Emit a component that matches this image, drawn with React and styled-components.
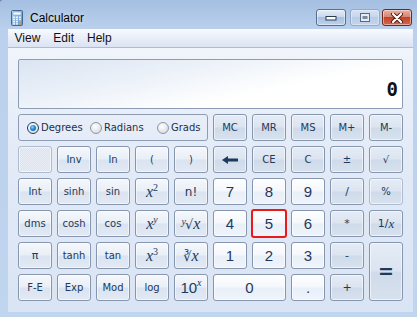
import React from 'react'
import styled, { createGlobalStyle, css } from 'styled-components'

const GlobalStyle = createGlobalStyle`
  html, body { margin: 0; padding: 0; }
  body { width: 417px; height: 317px; overflow: hidden; background: #6f7d90; }
  * { box-sizing: border-box; }
`

const Window = styled.div`
  width: 417px;
  height: 317px;
  display: flex;
  flex-direction: column;
  border-top-left-radius: 3px;
  background: linear-gradient(to bottom, #a4bfe1 0px, #bad0ec 29px, #c0d5ee 100%);
  font-family: "Liberation Sans", Arial, sans-serif;
`

const TitleBar = styled.div`
  height: 29px;
  flex: none;
  display: flex;
  align-items: center;
  padding: 6px 5px 0 11px;
`

const Title = styled.span`
  margin-left: 7px;
  font-size: 12px;
  color: #000;
  text-shadow: 0 0 6px rgba(255, 255, 255, 0.8);
`

const Caption = styled.div`
  margin-left: auto;
  display: flex;
  align-items: center;
`

const capKinds = {
  min: css`
    border-color: #566e8f;
    background: linear-gradient(to bottom, #e4edf8 0%, #c9d9ee 45%, #a8c0e0 50%, #bdd2ec 100%);
  `,
  max: css`
    margin: 0 2px 0 4px;
    border-color: #8ea4c2;
    background: linear-gradient(to bottom, #dce7f5 0%, #cbdaee 45%, #b9cde8 50%, #c6d8ee 100%);
    opacity: 0.85;
  `,
  close: css`
    border-color: #6c2a1f;
    background: linear-gradient(to bottom, #eab0a2 0%, #d98571 45%, #c2432a 50%, #d3684d 100%);
  `,
}

const CapButton = styled.div`
  width: 30px;
  height: 17px;
  border: 1px solid;
  border-radius: 3px;
  display: flex;
  align-items: center;
  justify-content: center;
  box-shadow: inset 0 0 0 1px rgba(255, 255, 255, 0.45);
  ${p => capKinds[p.$kind]}
`

const Client = styled.div`
  flex: 1;
  margin: 0 4px 5px 8px;
  display: flex;
  flex-direction: column;
`

const MenuBar = styled.div`
  height: 19px;
  flex: none;
  display: flex;
  align-items: center;
  background: linear-gradient(to bottom, #f8fafd 0%, #e9eef8 50%, #dbe3f2 100%);
  border-bottom: 1px solid #b3bccb;
`

const MenuItem = styled.span`
  padding: 0 6.5px;
  font-size: 12px;
  color: #111;
`

const Body = styled.div`
  flex: 1;
  padding: 11px 10px;
  background: linear-gradient(to bottom, #f0f4fb 0%, #e3ebf7 40%, #d9e4f4 100%);
`

const Display = styled.div`
  height: 50px;
  margin-bottom: 5px;
  border: 1px solid #8c9db5;
  border-radius: 2px;
  display: flex;
  align-items: flex-end;
  justify-content: flex-end;
  padding: 0 4px 9px 0;
  background: linear-gradient(168deg, #dae4f2 0%, #edf2f9 35%, #ffffff 65%);
  font-family: "DejaVu Sans Mono", "Liberation Mono", monospace;
  font-weight: bold;
  font-size: 19px;
  line-height: 1;
  color: #111;
`

const Pad = styled.div`
  display: grid;
  grid-template-columns: repeat(10, 34px);
  grid-auto-rows: 27px;
  gap: 5px;
`

const RadioGroup = styled.div`
  grid-column: span 5;
  border: 1px solid #8c9db5;
  border-radius: 3px;
  display: flex;
  align-items: center;
  padding-left: 8px;
`

const RadioItem = styled.label`
  display: flex;
  align-items: center;
  width: ${p => (p.$w ? `${p.$w}px` : 'auto')};
  font-family: "DejaVu Sans", Verdana, sans-serif;
  font-size: 10px;
  color: #1e2f48;
`

const RadioDot = styled.span`
  position: relative;
  width: 12px;
  height: 12px;
  margin-right: 2px;
  border-radius: 50%;
  border: 1px solid ${p => (p.$on ? '#2a3d55' : '#8f98a4')};
  background: radial-gradient(circle at 40% 35%, #ffffff 0%, #e9ecef 45%, #c9ced5 100%);
  ${p =>
    p.$on &&
    css`
      &::after {
        content: '';
        position: absolute;
        left: 2px;
        top: 2px;
        width: 6px;
        height: 6px;
        border-radius: 50%;
        background: radial-gradient(circle at 40% 35%, #8fd6ff 0%, #2a8fe0 40%, #0b4c94 100%);
      }
    `}
`

const keyVariants = {
  num: css`
    background: linear-gradient(to bottom, #fdfeff 0%, #f4f7fc 48%, #e9eff8 52%, #f0f4fb 100%);
  `,
  fn: css`
    background: linear-gradient(to bottom, #f5f8fc 0%, #e9eff7 48%, #dae3f0 52%, #e2e9f4 100%);
  `,
  op: css`
    background: linear-gradient(to bottom, #e5ecf6 0%, #dbe4f0 48%, #cfdaea 52%, #d8e2ee 100%);
  `,
  blank: css`
    background: repeating-conic-gradient(#dbe3ef 0 25%, #e9eef6 0 50%) 0 0 / 2px 2px;
  `,
}

const Key = styled.button`
  padding: 0;
  border: 1px solid ${p => (p.$off ? '#aebcd0' : '#8596ae')};
  border-radius: 3px;
  display: flex;
  align-items: center;
  justify-content: center;
  font-family: "DejaVu Sans", Verdana, sans-serif;
  font-size: ${p => p.$size || 10}px;
  line-height: 1;
  color: #1e395b;
  box-shadow: inset 0 0 0 1px rgba(255, 255, 255, 0.55);
  ${p => keyVariants[p.$v || 'fn']}
  ${p => p.$cols && css`grid-column: span ${p.$cols};`}
  ${p => p.$rows && css`grid-row: span ${p.$rows};`}
  ${p =>
    p.$hl &&
    css`
      border: 2px solid #ea1a1a;
      margin: -1px;
      box-shadow: none;
    `}
`

const Digit = styled.span`
  font-family: "Liberation Sans", Arial, sans-serif;
  font-size: 15px;
  color: #1e395b;
`

const Equals = styled.span`
  font-family: "DejaVu Sans", Verdana, sans-serif;
  font-weight: bold;
  font-size: 19px;
  color: #1e395b;
`

const MathX = styled.span`
  font-family: "Liberation Serif", "Times New Roman", serif;
  font-style: italic;
  font-size: ${p => p.$size || 16}px;
  color: #1e395b;
`

const Sup = styled.span`
  display: inline-block;
  position: relative;
  top: ${p => p.$top ?? -6}px;
  margin-right: ${p => p.$mr || 0}px;
  font-family: "Liberation Serif", "Times New Roman", serif;
  font-style: ${p => (p.$italic ? 'italic' : 'normal')};
  font-size: 10px;
`

const Radical = styled.span`
  font-family: "DejaVu Sans", sans-serif;
  font-style: normal;
  font-size: 13px;
`

const AppIcon = () => (
  <svg width="12" height="16" viewBox="0 0 12 16">
    <defs>
      <linearGradient id="ic" x1="0" y1="0" x2="1" y2="1">
        <stop offset="0" stopColor="#bcd8f4" />
        <stop offset="1" stopColor="#5d8fc6" />
      </linearGradient>
    </defs>
    <rect x="0.5" y="0.5" width="11" height="15" rx="1" fill="url(#ic)" stroke="#3f6898" />
    <rect x="2" y="2" width="8" height="3" fill="#f4fbff" stroke="#7ea2c8" strokeWidth="0.6" />
    {[0, 1, 2, 3].map(r =>
      [0, 1, 2].map(c => (
        <rect
          key={`${r}-${c}`}
          x={2 + c * 3}
          y={6.5 + r * 2.2}
          width="2"
          height="1.5"
          fill={c === 2 && r > 1 ? '#f39a2b' : '#eaf3fc'}
        />
      ))
    )}
  </svg>
)

const BackArrow = () => (
  <svg width="16" height="8" viewBox="0 0 16 8">
    <polygon points="0,4 6,0 6,8" fill="#1e395b" />
    <rect x="5" y="2.5" width="11" height="3" fill="#1e395b" />
  </svg>
)

const MinGlyph = () => (
  <svg width="12" height="6" viewBox="0 0 12 6">
    <rect x="1" y="1.5" width="10" height="3.5" fill="#fff" stroke="#2b3a4f" />
  </svg>
)

const MaxGlyph = () => (
  <svg width="10" height="9" viewBox="0 0 10 9">
    <rect x="0.5" y="0.5" width="9" height="8" fill="#eef3f9" stroke="#4a5a6e" />
    <rect x="2.5" y="3" width="5" height="3" fill="#6f7f94" />
  </svg>
)

const CloseGlyph = () => (
  <svg width="14" height="10" viewBox="0 0 14 10">
    <path d="M3 1 L11 9 M11 1 L3 9" stroke="#4a1a12" strokeWidth="4" strokeLinecap="round" />
    <path d="M3 1 L11 9 M11 1 L3 9" stroke="#fff" strokeWidth="2.2" strokeLinecap="round" />
  </svg>
)

const Power = ({ n, italic }) => (
  <MathX>
    x<Sup $italic={italic}>{n}</Sup>
  </MathX>
)

export default function App() {
  return (
    <>
      <GlobalStyle />
      <Window>
        <TitleBar>
          <AppIcon />
          <Title>Calculator</Title>
          <Caption>
            <CapButton $kind="min"><MinGlyph /></CapButton>
            <CapButton $kind="max"><MaxGlyph /></CapButton>
            <CapButton $kind="close"><CloseGlyph /></CapButton>
          </Caption>
        </TitleBar>
        <Client>
          <MenuBar>
            <MenuItem>View</MenuItem>
            <MenuItem>Edit</MenuItem>
            <MenuItem>Help</MenuItem>
          </MenuBar>
          <Body>
            <Display>0</Display>
            <Pad>
              <RadioGroup>
                <RadioItem $w={63}><RadioDot $on />Degrees</RadioItem>
                <RadioItem $w={67}><RadioDot />Radians</RadioItem>
                <RadioItem><RadioDot />Grads</RadioItem>
              </RadioGroup>
              <Key $v="op">MC</Key>
              <Key $v="op">MR</Key>
              <Key $v="op">MS</Key>
              <Key $v="op">M+</Key>
              <Key $v="op">M-</Key>

              <Key $v="blank" $off />
              <Key>Inv</Key>
              <Key>ln</Key>
              <Key>(</Key>
              <Key>)</Key>
              <Key $v="op"><BackArrow /></Key>
              <Key $v="op">CE</Key>
              <Key $v="op">C</Key>
              <Key $v="op">±</Key>
              <Key $v="op">√</Key>

              <Key>Int</Key>
              <Key>sinh</Key>
              <Key>sin</Key>
              <Key><Power n="2" /></Key>
              <Key $size={12}>n!</Key>
              <Key $v="num"><Digit>7</Digit></Key>
              <Key $v="num"><Digit>8</Digit></Key>
              <Key $v="num"><Digit>9</Digit></Key>
              <Key $v="op" $size={11}>/</Key>
              <Key $v="op" $off>%</Key>

              <Key>dms</Key>
              <Key>cosh</Key>
              <Key>cos</Key>
              <Key><Power n="y" italic /></Key>
              <Key>
                <MathX>
                  <Sup $italic $top={-4} $mr={-1}>y</Sup>
                  <Radical>√</Radical>x
                </MathX>
              </Key>
              <Key $v="num"><Digit>4</Digit></Key>
              <Key $v="num" $hl><Digit>5</Digit></Key>
              <Key $v="num"><Digit>6</Digit></Key>
              <Key $v="op" $size={11}>*</Key>
              <Key $v="op" $size={11}>
                1/<MathX $size={13}>x</MathX>
              </Key>

              <Key $size={11}>π</Key>
              <Key>tanh</Key>
              <Key>tan</Key>
              <Key><Power n="3" /></Key>
              <Key>
                <MathX>
                  <Radical>∛</Radical>x
                </MathX>
              </Key>
              <Key $v="num"><Digit>1</Digit></Key>
              <Key $v="num"><Digit>2</Digit></Key>
              <Key $v="num"><Digit>3</Digit></Key>
              <Key $v="op" $size={11}>-</Key>
              <Key $v="op" $rows={2}><Equals>=</Equals></Key>

              <Key>F-E</Key>
              <Key>Exp</Key>
              <Key>Mod</Key>
              <Key>log</Key>
              <Key>
                <Digit>10</Digit>
                <Sup $italic $top={-5}>x</Sup>
              </Key>
              <Key $v="num" $cols={2}><Digit>0</Digit></Key>
              <Key $v="num"><Digit>.</Digit></Key>
              <Key $v="op" $size={11}>+</Key>
            </Pad>
          </Body>
        </Client>
      </Window>
    </>
  )
}
